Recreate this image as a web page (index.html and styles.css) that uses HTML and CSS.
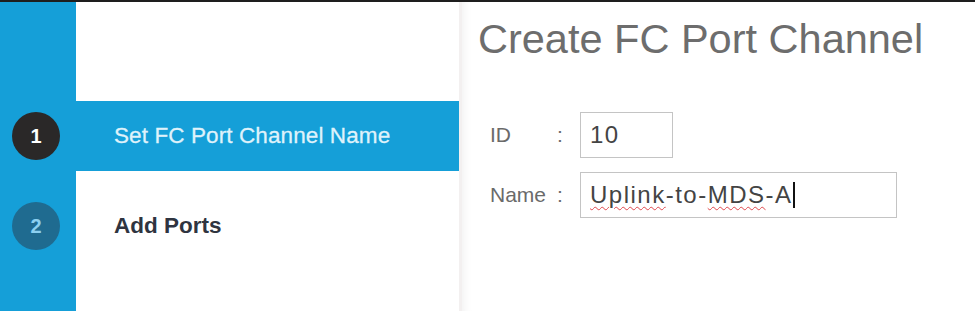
FILE: index.html
```html
<!DOCTYPE html>
<html lang="en">
<head>
    <meta charset="UTF-8">
    <meta name="viewport" content="width=device-width, initial-scale=1.0">
    <title>Create FC Port Channel</title>
    <link rel="stylesheet" href="styles.css">
</head>
<body>
<div class="topbar"></div>

<div class="wizard">
    <div class="steps">
        <div class="step active">
            <div class="step_num"><span class="circle">1</span></div>
            <div class="step_label">Set FC Port Channel Name</div>
        </div>
        <div class="step">
            <div class="step_num"><span class="circle">2</span></div>
            <div class="step_label">Add Ports</div>
        </div>
    </div>

    <div class="main">
        <h1 class="title">Create FC Port Channel</h1>
        <div class="form">
            <div class="field_label">ID</div>
            <div class="colon">:</div>
            <div class="field small"><span>10</span></div>

            <div class="field_label">Name</div>
            <div class="colon">:</div>
            <div class="field wide"><span class="typo">Uplink</span>-to-<span class="typo">MDS</span>-A<span class="caret"></span></div>
        </div>
    </div>
</div>
</body>
</html>
```

FILE: styles.css
```css
body { margin: 0; font-family: "Liberation Sans", Arial, Helvetica, sans-serif; background: #fff; }

.topbar { height: 2px; background: #1e1e1e; }

.wizard {
    display: flex;
    flex-direction: row;
    height: 309px;
}

/* left side: blue rail + step list */
.steps {
    width: 459px;
    padding-top: 99px;
    display: flex;
    flex-direction: column;
    gap: 20px;
    background: linear-gradient(to right, #159fd8 76px, #fff 76px);
    border-right: 3px solid #f3f0f0;
}
.step {
    display: flex;
    align-items: center;
    height: 70px;
}
.step.active { background: #159fd8; }

.step_num { width: 114px; padding-left: 12px; box-sizing: border-box; }
.circle {
    display: flex;
    align-items: center;
    justify-content: center;
    width: 48px;
    height: 48px;
    border-radius: 50%;
    background: #1f6b90;
    color: #8cd0f0;
    font-weight: bold;
    font-size: 20px;
}
.step.active .circle { background: #2a2828; color: #fff; }

.step_label { font-size: 22.5px; font-weight: bold; color: #2f3440; }
.step.active .step_label { font-weight: normal; color: #dff2fb; letter-spacing: 0.1px; -webkit-text-stroke: 0.3px #dff2fb; }

/* right side */
.main {
    flex: 1;
    padding: 13px 0 0 16px;
    box-shadow: inset 10px 0 10px -8px rgba(0, 0, 0, 0.06);
}
.title {
    margin: 0;
    font-size: 41.5px;
    line-height: 48px;
    font-weight: normal;
    color: #6d6d6d;
}

.form {
    display: grid;
    grid-template-columns: 66px 24px auto;
    grid-auto-rows: 46px;
    row-gap: 14px;
    align-items: center;
    margin: 49px 0 0 12px;
    font-size: 21px;
    color: #6a6a6a;
}
.colon { padding-left: 1px; }

.field {
    height: 46px;
    box-sizing: border-box;
    border: 1.5px solid #c4c4c4;
    padding: 0 9px;
    display: flex;
    align-items: center;
    font-size: 24px;
    letter-spacing: 1.5px;
    color: #444;
}
.field.small { width: 93px; }
.field.wide { width: 317px; }

.typo { text-decoration: underline wavy #e0474c; text-decoration-thickness: 1px; text-underline-offset: 3px; }
.caret { width: 2px; height: 26px; background: #111; }
```
